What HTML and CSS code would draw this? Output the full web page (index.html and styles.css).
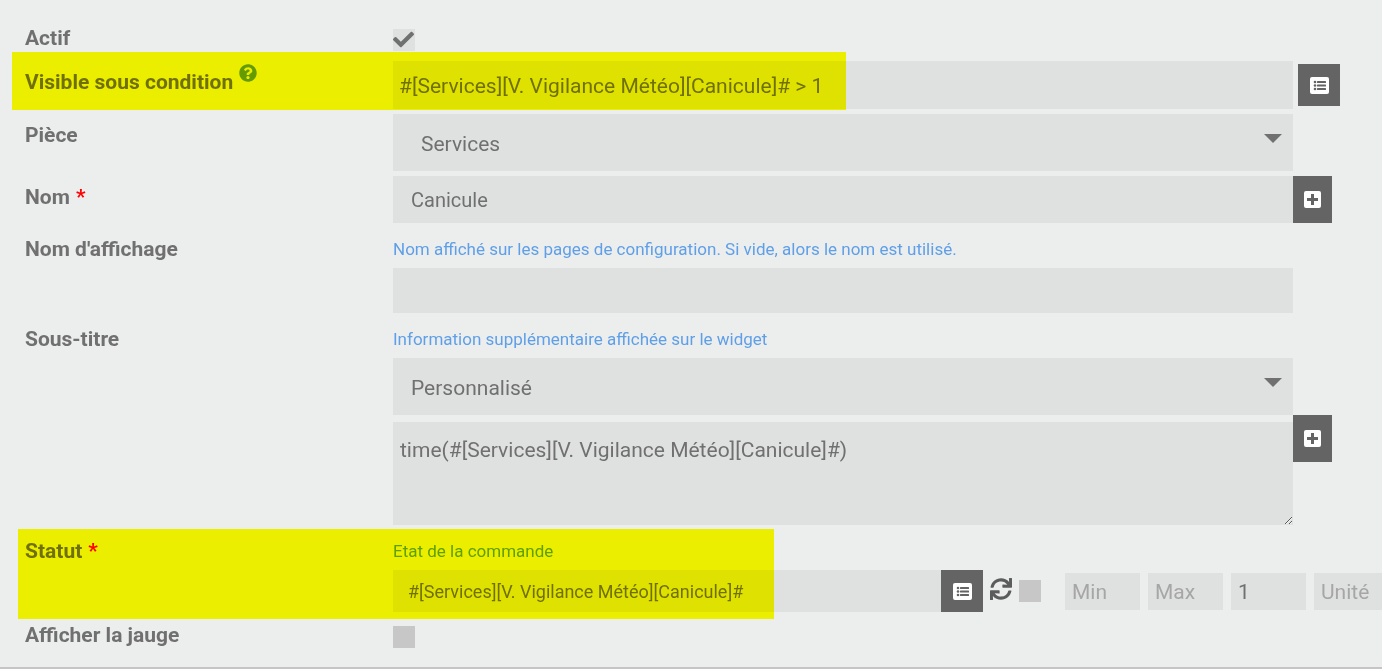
FILE: index.html
```html
<!DOCTYPE html>
<html lang="fr">
<head>
  <meta charset="UTF-8"/>
  <meta name="viewport" content="width=device-width, initial-scale=1.0"/>
  <title>Configuration du widget</title>
  <link rel="stylesheet" href="styles.css">
</head>
<body>
  <svg class="sprite" aria-hidden="true">
    <symbol id="i-list" viewBox="0 0 19 17">
      <rect width="19" height="17" rx="2" fill="#fff"/>
      <g fill="#646464">
        <circle cx="5" cy="5" r="1.3"/><rect x="7" y="4" width="9" height="2" rx=".5"/>
        <circle cx="5" cy="8.5" r="1.3"/><rect x="7" y="7.5" width="9" height="2" rx=".5"/>
        <circle cx="5" cy="12" r="1.3"/><rect x="7" y="11" width="9" height="2" rx=".5"/>
      </g>
    </symbol>
    <symbol id="i-plus" viewBox="0 0 17 17">
      <rect width="17" height="17" rx="2" fill="#fff"/>
      <path fill="#646464" d="M7 3h3v4h4v3h-4v4H7v-4H3V7h4z"/>
    </symbol>
  </svg>

  <form class="config">
    <div class="row row-check">
      <label for="actif">Actif</label>
      <div class="field">
        <span class="check">
          <input type="checkbox" id="actif" checked>
          <svg viewBox="0 0 512 512"><path d="M173.898 439.404l-166.4-166.4c-9.997-9.997-9.997-26.206 0-36.204l36.203-36.204c9.997-9.998 26.207-9.998 36.204 0L192 312.69 432.095 72.596c9.997-9.997 26.207-9.997 36.204 0l36.203 36.204c9.997 9.997 9.997 26.206 0 36.204l-294.4 294.401c-9.998 9.997-26.207 9.997-36.204-.001z"/></svg>
        </span>
      </div>
    </div>

    <div class="row">
      <label for="visible">Visible sous condition
        <svg class="help" viewBox="0 0 512 512"><path d="M504 256c0 136.997-111.043 248-248 248S8 392.997 8 256C8 119.083 119.043 8 256 8s248 111.083 248 248zM262.655 90c-54.497 0-89.255 22.957-116.549 63.758-3.536 5.286-2.353 12.415 2.715 16.258l34.699 26.31c5.205 3.947 12.621 3.008 16.665-2.122 17.864-22.658 30.113-35.797 57.303-35.797 20.429 0 45.698 13.148 45.698 32.958 0 14.976-12.363 22.667-32.534 33.976C247.128 238.528 216 254.941 216 296v4c0 6.627 5.373 12 12 12h56c6.627 0 12-5.373 12-12v-1.333c0-28.462 83.186-29.647 83.186-106.667 0-58.002-60.165-102-116.531-102zM256 338c-25.365 0-46 20.635-46 46 0 25.364 20.635 46 46 46s46-20.636 46-46c0-25.364-20.635-46-46-46z"/></svg>
      </label>
      <div class="field">
        <input type="text" id="visible" class="input condition" value="#[Services][V. Vigilance Météo][Canicule]# &gt; 1">
      </div>
      <div class="side side-gap">
        <button type="button" class="btn btn-square" aria-label="Choisir une commande"><svg class="icon-list"><use href="#i-list"/></svg></button>
      </div>
      <span class="marker marker-condition"></span>
    </div>

    <div class="row">
      <label for="piece">Pièce</label>
      <div class="field">
        <div class="select">
          <select id="piece" class="indent"><option>Services</option></select>
        </div>
      </div>
    </div>

    <div class="row">
      <label for="nom">Nom <span class="req">*</span></label>
      <div class="field">
        <input type="text" id="nom" class="input" value="Canicule">
      </div>
      <div class="side">
        <button type="button" class="btn" aria-label="Ajouter au nom"><svg class="icon-plus"><use href="#i-plus"/></svg></button>
      </div>
    </div>

    <div class="row">
      <label for="affichage">Nom d'affichage</label>
      <div class="field">
        <p class="hint">Nom affiché sur les pages de configuration. Si vide, alors le nom est utilisé.</p>
        <input type="text" id="affichage" class="input input-empty">
      </div>
    </div>

    <div class="row">
      <label for="soustitre">Sous-titre</label>
      <div class="field">
        <p class="hint">Information supplémentaire affichée sur le widget</p>
        <div class="select">
          <select id="soustitre"><option>Personnalisé</option></select>
        </div>
        <textarea aria-label="Sous-titre personnalisé">time(#[Services][V. Vigilance Météo][Canicule]#)</textarea>
      </div>
      <div class="side side-subtitle">
        <button type="button" class="btn" aria-label="Ajouter au sous-titre"><svg class="icon-plus"><use href="#i-plus"/></svg></button>
      </div>
    </div>

    <div class="row">
      <label for="statut">Statut <span class="req">*</span></label>
      <div class="field field-wide">
        <p class="hint">Etat de la commande</p>
        <div class="status">
          <input type="text" id="statut" class="input command" value="#[Services][V. Vigilance Météo][Canicule]#">
          <button type="button" class="btn btn-square" aria-label="Choisir une commande"><svg class="icon-list"><use href="#i-list"/></svg></button>
          <svg class="sync" viewBox="0 0 512 512"><path d="M440.65 12.57l4 82.77A247.16 247.16 0 0 0 255.83 8C134.73 8 33.91 94.92 12.29 209.82A12 12 0 0 0 24.09 224h49.05a12 12 0 0 0 11.67-9.26 175.91 175.91 0 0 1 317-56.94l-101.46-4.86a12 12 0 0 0-12.57 12v47.41a12 12 0 0 0 12 12H500a12 12 0 0 0 12-12V12a12 12 0 0 0-12-12h-47.37a12 12 0 0 0-11.98 12.57zM255.83 432a175.61 175.61 0 0 1-146-77.8l101.8 4.87a12 12 0 0 0 12.57-12v-47.4a12 12 0 0 0-12-12H12a12 12 0 0 0-12 12V500a12 12 0 0 0 12 12h47.35a12 12 0 0 0 12-12.6l-4.15-82.57A247.17 247.17 0 0 0 255.83 504c121.11 0 221.93-86.92 243.55-201.82a12 12 0 0 0-11.8-14.18h-49.05a12 12 0 0 0-11.67 9.26A175.86 175.86 0 0 1 255.83 432z"/></svg>
          <input type="checkbox" class="invert" aria-label="Inverser">
          <div class="range">
            <input type="text" placeholder="Min" aria-label="Min">
            <input type="text" placeholder="Max" aria-label="Max">
            <input type="text" value="1" aria-label="Pas">
            <input type="text" placeholder="Unité" aria-label="Unité">
          </div>
        </div>
      </div>
      <span class="marker marker-status"></span>
    </div>

    <div class="row row-check">
      <label for="jauge">Afficher la jauge</label>
      <div class="field">
        <span class="check"><input type="checkbox" id="jauge"></span>
      </div>
    </div>
  </form>
</body>
</html>
```
FILE: styles.css
```css
*{box-sizing:border-box;}
body{
  margin:0;background:#eceeed;color:#707070;overflow-x:hidden;
  font-family:Roboto,"Liberation Sans",sans-serif;font-size:21px;
}
input,select,textarea,button{
  margin:0;border:none;border-radius:0;outline:none;
  font-family:inherit;font-size:21px;color:inherit;
}
svg{display:block;flex:none;}
.sprite{position:absolute;width:0;height:0;}

.config{
  display:flex;flex-direction:column;gap:5px;
  padding:20px 0 14px 25px;border-bottom:2px solid #c5c5c5;
}
.row{position:relative;display:flex;align-items:flex-start;}
.row > label{
  flex:none;width:368px;padding-top:8px;
  display:flex;gap:6px;line-height:26px;font-weight:700;
}
.row-check{height:36px;}
.row-check > label{padding-top:5px;}
.req{color:#f00;}
.help{width:18px;height:18px;margin-top:-5px;fill:#649be6;}
.field{flex:1;min-width:0;margin-right:89px;}
.field-wide{margin-right:0;}
.hint{margin:0;padding-top:8px;height:40px;font-size:17px;line-height:26px;color:#5f9fe8;}

.input{display:block;width:100%;height:47px;padding:0 18px;background:#dfe1e0;font-size:20px;}
.input-empty{height:45px;}
.condition{height:48px;padding:2px 6px 0;font-size:21px;}

.select{position:relative;}
.select select{
  display:block;width:100%;height:57px;padding:2px 18px 0;
  background:#dfe1e0;appearance:none;
}
.select .indent{padding-left:28px;}
.select::after{
  content:"";position:absolute;right:11px;top:20px;pointer-events:none;
  border:9px solid transparent;border-top-color:#707070;border-bottom:none;
}
textarea{
  display:block;width:100%;height:103px;margin-top:7px;padding:15px 7px;
  background:#dfe1e0;line-height:26px;resize:vertical;
}

/* boutons à droite des champs */
.side{width:89px;margin-left:-89px;}
.side-gap{padding:3px 0 0 5px;}
.side-subtitle{padding-top:97px;}
.btn{
  flex:none;display:flex;align-items:center;justify-content:center;
  width:39px;height:47px;padding:0;background:#646464;cursor:pointer;
}
.btn-square{width:42px;height:42px;}
.icon-list{width:19px;height:17px;}
.icon-plus{width:17px;height:17px;}

/* cases à cocher */
input[type=checkbox]{
  appearance:none;display:block;flex:none;width:22px;height:22px;background:#c7c7c7;
}
input[type=checkbox]:checked{background:#dfe1e0;}
.check{display:block;position:relative;width:22px;margin-top:9px;}
.check svg{position:absolute;left:0;top:0;width:21px;height:21px;fill:#707070;pointer-events:none;}

.status{display:flex;align-items:center;}
.command{flex:1;min-width:0;height:42px;padding:0 15px;font-size:18px;}
.sync{width:22px;height:22px;margin:0 7px 4px 7px;fill:#5c5c5c;}
.range{display:flex;gap:8px;margin:0 -7px 0 24px;}
.range input{width:75px;height:37px;padding:2px 7px 0;background:#dfe1e0;}
.range input::placeholder{color:#a6a6a6;opacity:1;}

/* surlignage au feutre */
.marker{position:absolute;background:#ff0;mix-blend-mode:multiply;pointer-events:none;}
.marker-condition{left:-13px;top:-9px;width:834px;height:58px;}
.marker-status{left:-7px;top:-1px;width:756px;height:90px;}
```
